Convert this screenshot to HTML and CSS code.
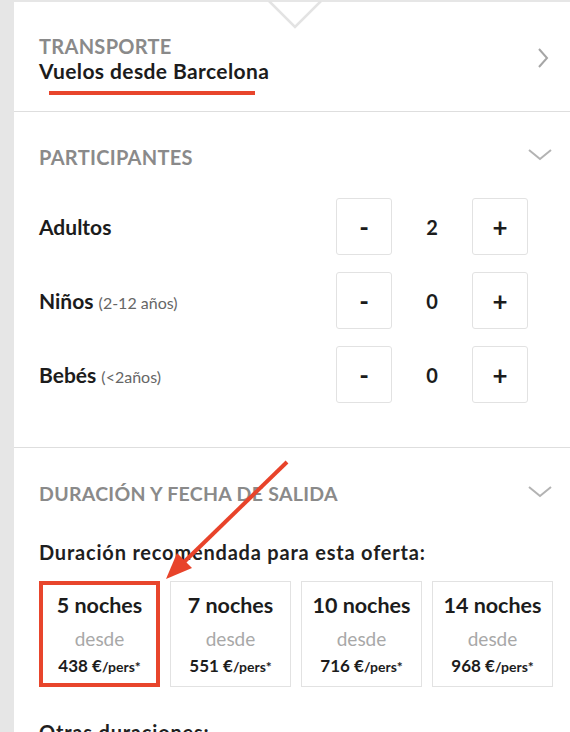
FILE: index.html
```html
<!DOCTYPE html>
<html lang="es">
<head>
    <meta charset="UTF-8" />
    <meta name="viewport" content="width=device-width, initial-scale=1.0" />
    <title>Configurar viaje</title>
    <link rel="stylesheet" href="styles.css">
</head>
<body>
    <div class="panel">
        <svg class="notch" width="58" height="30" viewBox="0 0 58 30">
            <polyline points="1 0 27 26 53 0" fill="none" stroke="#e3e3e3" stroke-width="2.5" />
        </svg>

        <section class="transport">
            <div>
                <div class="section-title">TRANSPORTE</div>
                <div class="transport-name">Vuelos desde Barcelona</div>
                <div class="mark"></div>
            </div>
            <svg class="chev-right" width="12" height="22" viewBox="0 0 12 22">
                <polyline points="2 2 10 11 2 20" fill="none" stroke="#a6a6a6" stroke-width="2" />
            </svg>
        </section>

        <section class="block participants">
            <div class="block-head">
                <div class="section-title">PARTICIPANTES</div>
                <svg class="chev-down" width="24" height="12" viewBox="0 0 24 12">
                    <polyline points="1 1 12 10 23 1" fill="none" stroke="#b3b3b3" stroke-width="2" />
                </svg>
            </div>

            <div class="pax-row">
                <div class="pax-label">Adultos</div>
                <div class="counter">
                    <span class="step">-</span>
                    <span class="count">2</span>
                    <span class="step">+</span>
                </div>
            </div>
            <div class="pax-row">
                <div class="pax-label">Niños <small>(2-12 años)</small></div>
                <div class="counter">
                    <span class="step">-</span>
                    <span class="count">0</span>
                    <span class="step">+</span>
                </div>
            </div>
            <div class="pax-row">
                <div class="pax-label">Bebés <small>(&lt;2años)</small></div>
                <div class="counter">
                    <span class="step">-</span>
                    <span class="count">0</span>
                    <span class="step">+</span>
                </div>
            </div>
        </section>

        <section class="block duration">
            <div class="block-head">
                <div class="section-title">DURACIÓN Y FECHA DE SALIDA</div>
                <svg class="chev-down" width="24" height="12" viewBox="0 0 24 12">
                    <polyline points="1 1 12 10 23 1" fill="none" stroke="#b3b3b3" stroke-width="2" />
                </svg>
            </div>

            <p class="lead">Duración recomendada para esta oferta:</p>

            <div class="nights">
                <div class="night selected">
                    <strong>5 noches</strong>
                    <span class="from">desde</span>
                    <span class="price">438 €<small>/pers*</small></span>
                </div>
                <div class="night">
                    <strong>7 noches</strong>
                    <span class="from">desde</span>
                    <span class="price">551 €<small>/pers*</small></span>
                </div>
                <div class="night">
                    <strong>10 noches</strong>
                    <span class="from">desde</span>
                    <span class="price">716 €<small>/pers*</small></span>
                </div>
                <div class="night">
                    <strong>14 noches</strong>
                    <span class="from">desde</span>
                    <span class="price">968 €<small>/pers*</small></span>
                </div>
            </div>

            <p class="lead other">Otras duraciones:</p>
        </section>

        <!-- annotation arrow drawn over the page -->
        <svg class="pointer" width="570" height="732" viewBox="0 0 570 732">
            <line x1="287" y1="462" x2="182" y2="564" stroke="#e8432a" stroke-width="4" />
            <polygon points="166,579 177,553 192,568" fill="#e8432a" />
        </svg>
    </div>
</body>
</html>
```

FILE: styles.css
```css
:root {
  --gray-bg: #e6e6e6;
  --line: #dedede;
  --text-dark: #1c1c1c;
  --title-gray: #8a8a8a;
  --accent: #e8452c;
}

html, body {
  margin: 0;
  height: 100%;
}

body {
  background-color: var(--gray-bg);
  font-family: 'Lato', 'Open Sans', sans-serif;
  color: var(--text-dark);
  overflow: hidden;
}

.panel {
  position: relative;
  margin: 2px 0 0 14px;
  background: #fff;
  min-height: 800px;
}

.notch {
  position: absolute;
  top: -1px;
  left: 254px;
}

.pointer {
  position: absolute;
  top: -2px;
  left: -14px;
  pointer-events: none;
}

.section-title {
  font-size: 20px;
  font-weight: 700;
  color: var(--title-gray);
  line-height: 24px;
  letter-spacing: 0.3px;
}

/* Transport */
.transport {
  height: 110px;
  box-sizing: border-box;
  padding: 32px 21px 0 25px;
  border-bottom: 1px solid var(--line);
  display: flex;
  justify-content: space-between;
  align-items: flex-start;
}

.transport-name {
  font-size: 21px;
  font-weight: 700;
  line-height: 28px;
  margin-top: -1px;
  letter-spacing: 0.4px;
}

.mark {
  width: 206px;
  height: 4px;
  margin: 6px 0 0 10px;
  background: var(--accent);
}

.chev-right {
  margin-top: 13px;
}

/* Blocks */
.block {
  padding: 33px 17px 0 25px;
  border-bottom: 1px solid var(--line);
}

.block-head {
  display: flex;
  justify-content: space-between;
  align-items: center;
  height: 24px;
}

.duration .section-title {
  font-size: 19.5px;
}

.chev-down {
  margin-right: 1px;
  margin-top: -4px;
}

.participants {
  height: 336px;
  box-sizing: border-box;
}

.pax-row {
  display: flex;
  justify-content: space-between;
  align-items: center;
  margin-top: 17px;
  padding-right: 25px;
}

.block-head + .pax-row {
  margin-top: 29px;
}

.pax-label {
  font-size: 21px;
  font-weight: 700;
}

.pax-label small {
  font-size: 16px;
  font-weight: 400;
  color: #666;
}

.counter {
  display: flex;
  align-items: center;
}

.step {
  width: 56px;
  height: 57px;
  box-sizing: border-box;
  border: 1px solid #e2e2e2;
  border-radius: 3px;
  display: flex;
  align-items: center;
  justify-content: center;
  font-size: 26px;
  font-weight: 700;
}

.count {
  width: 80px;
  text-align: center;
  font-size: 20px;
  font-weight: 700;
}

/* Duration */
.duration {
  padding-top: 34px;
}

.lead {
  margin: 34px 0 0;
  font-size: 20px;
  font-weight: 700;
  line-height: 24px;
  letter-spacing: 0.8px;
  color: #1f1f1f;
}

.nights {
  display: grid;
  grid-template-columns: repeat(4, 1fr);
  gap: 10px;
  margin-top: 17px;
}

.night {
  height: 106px;
  box-sizing: border-box;
  border: 1px solid #e2e2e2;
  display: flex;
  flex-direction: column;
  align-items: center;
  padding-top: 9px;
}

.night.selected {
  border: 4px solid var(--accent);
  padding-top: 6px;
}

.night strong {
  font-size: 21.5px;
  line-height: 28px;
}

.from {
  margin-top: 9px;
  font-size: 19px;
  color: #a8a8a8;
  line-height: 22px;
}

.price {
  margin-top: 5px;
  font-size: 17px;
  font-weight: 700;
  line-height: 22px;
}

.price small {
  font-size: 14px;
}

.other {
  margin-top: 33px;
}
```
